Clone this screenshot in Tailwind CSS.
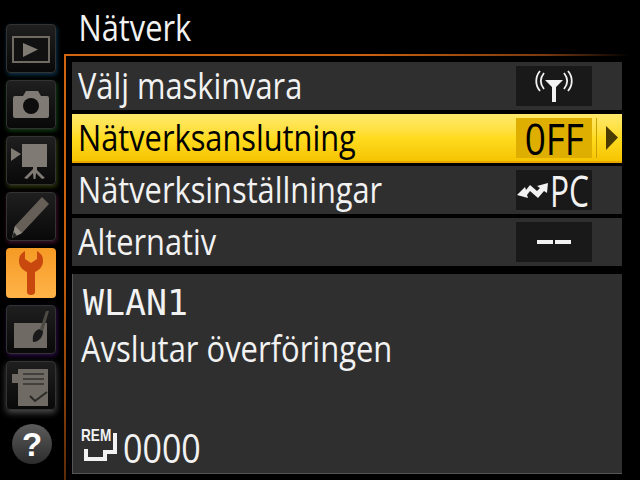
<!DOCTYPE html>
<html lang="en">
<head>
  <meta charset="UTF-8" />
  <title>Nätverk</title>
  <script src="https://cdn.jsdelivr.net/npm/@tailwindcss/browser@4"></script>
</head>
<body class="bg-black">
  <div class="w-[640px] h-[480px] overflow-hidden bg-black flex font-['Open_Sans',sans-serif] text-[#f2f2f2]">
    <!-- menu tabs -->
    <div class="w-[64px] shrink-0 pt-[24px] pl-[6px] flex flex-col gap-[7px]">
      <div class="w-[50px] h-[49px] rounded-[4px] border border-[#333] bg-gradient-to-b from-[#1f1f1f] to-[#090909] shadow-[1px_2px_4px_#0c3550] flex items-center justify-center">
        <svg width="40" height="30" viewBox="0 0 40 30"><rect x="2" y="3" width="36" height="25" fill="#111" stroke="#6f6a62" stroke-width="2"/><path d="M12 9 L27 15.5 L12 23 Z" fill="#7f7a72"/></svg>
      </div>
      <div class="w-[50px] h-[49px] rounded-[4px] border border-[#333] bg-gradient-to-b from-[#1f1f1f] to-[#090909] shadow-[1px_2px_4px_#123f14] flex items-center justify-center">
        <svg width="40" height="30" viewBox="0 0 40 30"><path d="M2 8 Q2 6 4 6 L12 6 L15 1 L27 1 L30 6 L36 6 Q38 6 38 8 L38 26 Q38 28 36 28 L4 28 Q2 28 2 26 Z" fill="#7f7b74"/><circle cx="20" cy="16" r="8" fill="#0d0d0d"/></svg>
      </div>
      <div class="w-[50px] h-[49px] rounded-[4px] border border-[#333] bg-gradient-to-b from-[#1f1f1f] to-[#090909] shadow-[1px_2px_4px_#2f3a0c] flex items-center justify-center">
        <svg width="40" height="36" viewBox="0 0 40 36"><path d="M0 5 L10 11 L0 18 Z" fill="#7f7a72"/><rect x="11" y="1" width="25" height="23" fill="#7f7b74"/><path d="M22 24 L26 24 L26 27 L34 35 L31 36 L25 30 L24.5 36 L22.5 36 L22 30 L16 36 L13 35 L22 26 Z" fill="#7f7b74"/></svg>
      </div>
      <div class="w-[50px] h-[49px] rounded-[4px] border border-[#333] bg-gradient-to-b from-[#1f1f1f] to-[#090909] shadow-[1px_2px_4px_#40102c] flex items-end justify-center">
        <svg width="40" height="44" viewBox="0 0 40 44"><path d="M31 1 L38 8 L11 37 L1 42 L4 30 Z" fill="#665f58"/><path d="M4 30 L11 37 L1 42 Z" fill="#8f8a82"/><path d="M1 42 L3 36 L6 40 Z" fill="#222"/></svg>
      </div>
      <div class="w-[50px] h-[50px] rounded-[4px] bg-gradient-to-b from-[#f59a24] to-[#ffb347] flex items-center justify-center">
        <svg width="24" height="46" viewBox="0 0 24 46"><path d="M6 1 C1 4 0 7 0 11 C0 17 4 20 8 22 L8 42 Q8 45 12 45 Q16 45 16 42 L16 22 C20 20 24 17 24 11 C24 7 23 4 18 1 L18 9 L12 13 L6 9 Z" fill="#c8480e"/></svg>
      </div>
      <div class="w-[50px] h-[49px] rounded-[4px] border border-[#333] bg-gradient-to-b from-[#1f1f1f] to-[#090909] shadow-[1px_2px_4px_#2c0c48] relative">
        <svg width="50" height="49" viewBox="0 0 50 49" class="absolute left-0 top-0"><rect x="7" y="17" width="33" height="25" fill="#6f6b64"/><path d="M39 5 L42 5 L36 25 L33 23 Z" fill="#4d4943"/><path d="M32 23 L36 25 C36 31 32 36 26 36 C25 30 27 25 32 23 Z" fill="#1a1a1a"/></svg>
      </div>
      <div class="w-[50px] h-[49px] rounded-[4px] border border-[#333] bg-gradient-to-b from-[#1f1f1f] to-[#090909] shadow-[0_3px_6px_#4a4a4a] relative">
        <svg width="50" height="49" viewBox="0 0 50 49" class="absolute left-0 top-0"><rect x="5" y="12" width="7" height="9" fill="#6f6b64"/><rect x="11" y="7" width="30" height="37" fill="#6f6b64"/><path d="M16 12 H37 M16 17 H37 M16 22 H37" stroke="#35332f" stroke-width="1.5"/><path d="M23 34 L28 39 L40 30" stroke="#2b2a27" stroke-width="2" fill="none"/></svg>
      </div>
      <div class="w-[40px] h-[40px] ml-[6px] mt-[7px] rounded-full bg-gradient-to-b from-[#5c5c5c] to-[#2c2c2c] flex items-center justify-center text-[33px] leading-none font-bold text-white font-['Liberation_Sans',sans-serif]">?</div>
    </div>

    <!-- main panel -->
    <div class="flex-1 flex flex-col min-w-0">
      <div class="h-[54px] pl-[17px] text-[36px] leading-[56px] origin-left scale-x-[0.855]">Nätverk</div>
      <div class="flex-1 w-[566px] pl-[8px] pt-[8px] flex flex-col bg-no-repeat bg-[length:100%_2px,2px_100%] bg-[linear-gradient(to_right,#d0660f,#c8600f_55%,#7a3a10_85%,transparent),linear-gradient(to_bottom,#d0660f,#c8600f_50%,#5a2a08)]">
        <div class="w-[550px] h-[48px] bg-[#2f2f2f] flex items-center text-[36px] pl-[6px]">
          <span class="flex-1 origin-left scale-x-[0.855]">Välj maskinvara</span>
          <div class="w-[76px] h-[40px] mr-[30px] bg-[#191919] flex items-center justify-center">
            <svg width="38" height="32" viewBox="0 0 38 32" fill="none" stroke="#f2f2f2"><path d="M9 3 C5 8 5 14 9 19 M5 1 C0 7 0 15 5 21 M29 3 C33 8 33 14 29 19 M33 1 C38 7 38 15 33 21" stroke-width="1.8"/><path d="M10 10 H28 L21 17 V32 H17 V17 Z" fill="#f2f2f2" stroke="none"/></svg>
          </div>
        </div>
        <div class="w-[550px] h-[49px] mt-[4px] bg-gradient-to-b from-[#ffe96a] via-[#ffdc1e] to-[#f6c400] border-b-2 border-[#e8a800] flex items-center text-[36px] text-black pl-[6px]">
          <span class="flex-1 origin-left scale-x-[0.855]">Nätverksanslutning</span>
          <div class="w-[76px] h-[40px] bg-[#deaf00] flex items-center justify-center text-[44px] leading-[40px]"><span class="scale-x-[0.84]">0FF</span></div>
          <div class="w-[30px] h-[40px] ml-[4px] mr-[-4px] border-l border-[#c9a000] flex items-center justify-center">
            <svg width="14" height="26" viewBox="0 0 14 26"><path d="M1 1 L13 12.5 L1 25 Z" fill="#4a3c00"/></svg>
          </div>
        </div>
        <div class="w-[550px] h-[48px] mt-[3px] bg-[#2f2f2f] flex items-center text-[36px] pl-[6px]">
          <span class="flex-1 origin-left scale-x-[0.855]">Nätverksinställningar</span>
          <div class="w-[76px] h-[40px] mr-[30px] bg-[#191919] flex items-center text-[44px] leading-[40px] pl-[1px]">
            <svg width="32" height="17" viewBox="0 0 32 17" class="shrink-0" fill="#f2f2f2"><path d="M0 13 L8 5 L9 8 L13 3 L20 9 L23 6 L20 4 L31 1 L30 11 L27 9 L21 16 L13 9 L10 13 L11 16 Z"/></svg>
            <span class="origin-left scale-x-[0.72] ml-[1px]">PC</span>
          </div>
        </div>
        <div class="w-[550px] h-[48px] mt-[4px] bg-[#2f2f2f] flex items-center text-[36px] pl-[6px]">
          <span class="flex-1 origin-left scale-x-[0.855]">Alternativ</span>
          <div class="w-[76px] h-[40px] mr-[30px] bg-[#191919] flex items-center justify-center gap-[2px]">
            <div class="w-[16px] h-[4px] bg-[#f2f2f2]"></div>
            <div class="w-[16px] h-[4px] bg-[#f2f2f2]"></div>
          </div>
        </div>
        <div class="w-[550px] h-[200px] mt-[8px] bg-[#2f2f2f] border-l border-b border-[#555] pl-[8px] pt-[8px] flex flex-col">
          <div class="text-[36px] leading-[42px] pl-[2px] font-['DejaVu_Sans_Mono',monospace] origin-left scale-x-[0.97]">WLAN1</div>
          <div class="text-[36px] leading-[42px] mt-[4px] origin-left scale-x-[0.86]">Avslutar överföringen</div>
          <div class="mt-auto mb-[7px] flex items-end">
            <div class="relative w-[42px] h-[38px] shrink-0">
              <span class="absolute left-0 top-0 text-[17px] leading-[15px] font-bold font-['Liberation_Sans',sans-serif] origin-left scale-x-[0.8]">REM</span>
              <svg width="42" height="38" viewBox="0 0 42 38" class="absolute left-0 top-0"><path d="M5 21 V31 H24 V24 H34 V5" fill="none" stroke="#f2f2f2" stroke-width="4"/></svg>
            </div>
            <span class="text-[41px] leading-[38px] origin-left scale-x-[0.83]">0000</span>
          </div>
        </div>
      </div>
    </div>
  </div>
</body>
</html>
